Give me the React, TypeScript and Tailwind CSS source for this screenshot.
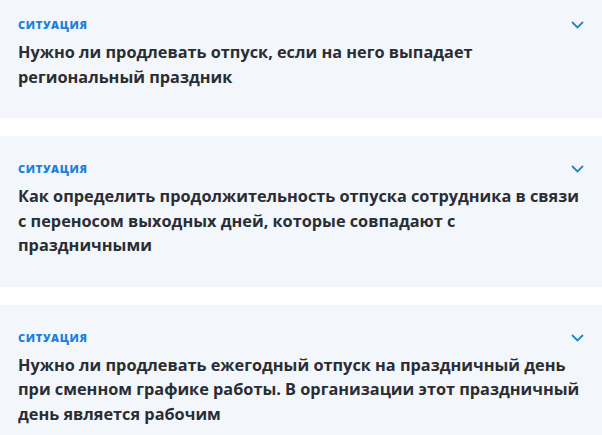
const ITEMS = [
  'Нужно ли продлевать отпуск, если на него выпадает региональный праздник',
  'Как определить продолжительность отпуска сотрудника в связи с переносом выходных дней, которые совпадают с праздничными',
  'Нужно ли продлевать ежегодный отпуск на праздничный день при сменном графике работы. В организации этот праздничный день является рабочим',
]

function Chevron() {
  return (
    <svg width="13" height="8" viewBox="0 0 13 8" fill="none" aria-hidden>
      <path d="M1 1l5.5 5.5L12 1" stroke="#1f86c6" strokeWidth="1.8" />
    </svg>
  )
}

export default function App() {
  return (
    <div className="-mt-2 flex flex-col gap-[18px] bg-white font-['Open_Sans',sans-serif]">
      {ITEMS.map((title) => (
        <article key={title} className="bg-[#f3f7fb] pt-[26px] pb-[29px] pl-[18px] pr-[12px]">
          <div className="flex items-center justify-between">
            <span className="text-[11px] font-extrabold leading-[14px] tracking-[0.06em] text-[#1b7fe0]">
              СИТУАЦИЯ
            </span>
            <span className="mr-[6px]">
              <Chevron />
            </span>
          </div>
          <h3 className="mt-[8px] max-w-[572px] text-[16.3px] font-bold leading-[24.5px] text-[#2a2d33]">
            {title}
          </h3>
        </article>
      ))}
    </div>
  )
}
